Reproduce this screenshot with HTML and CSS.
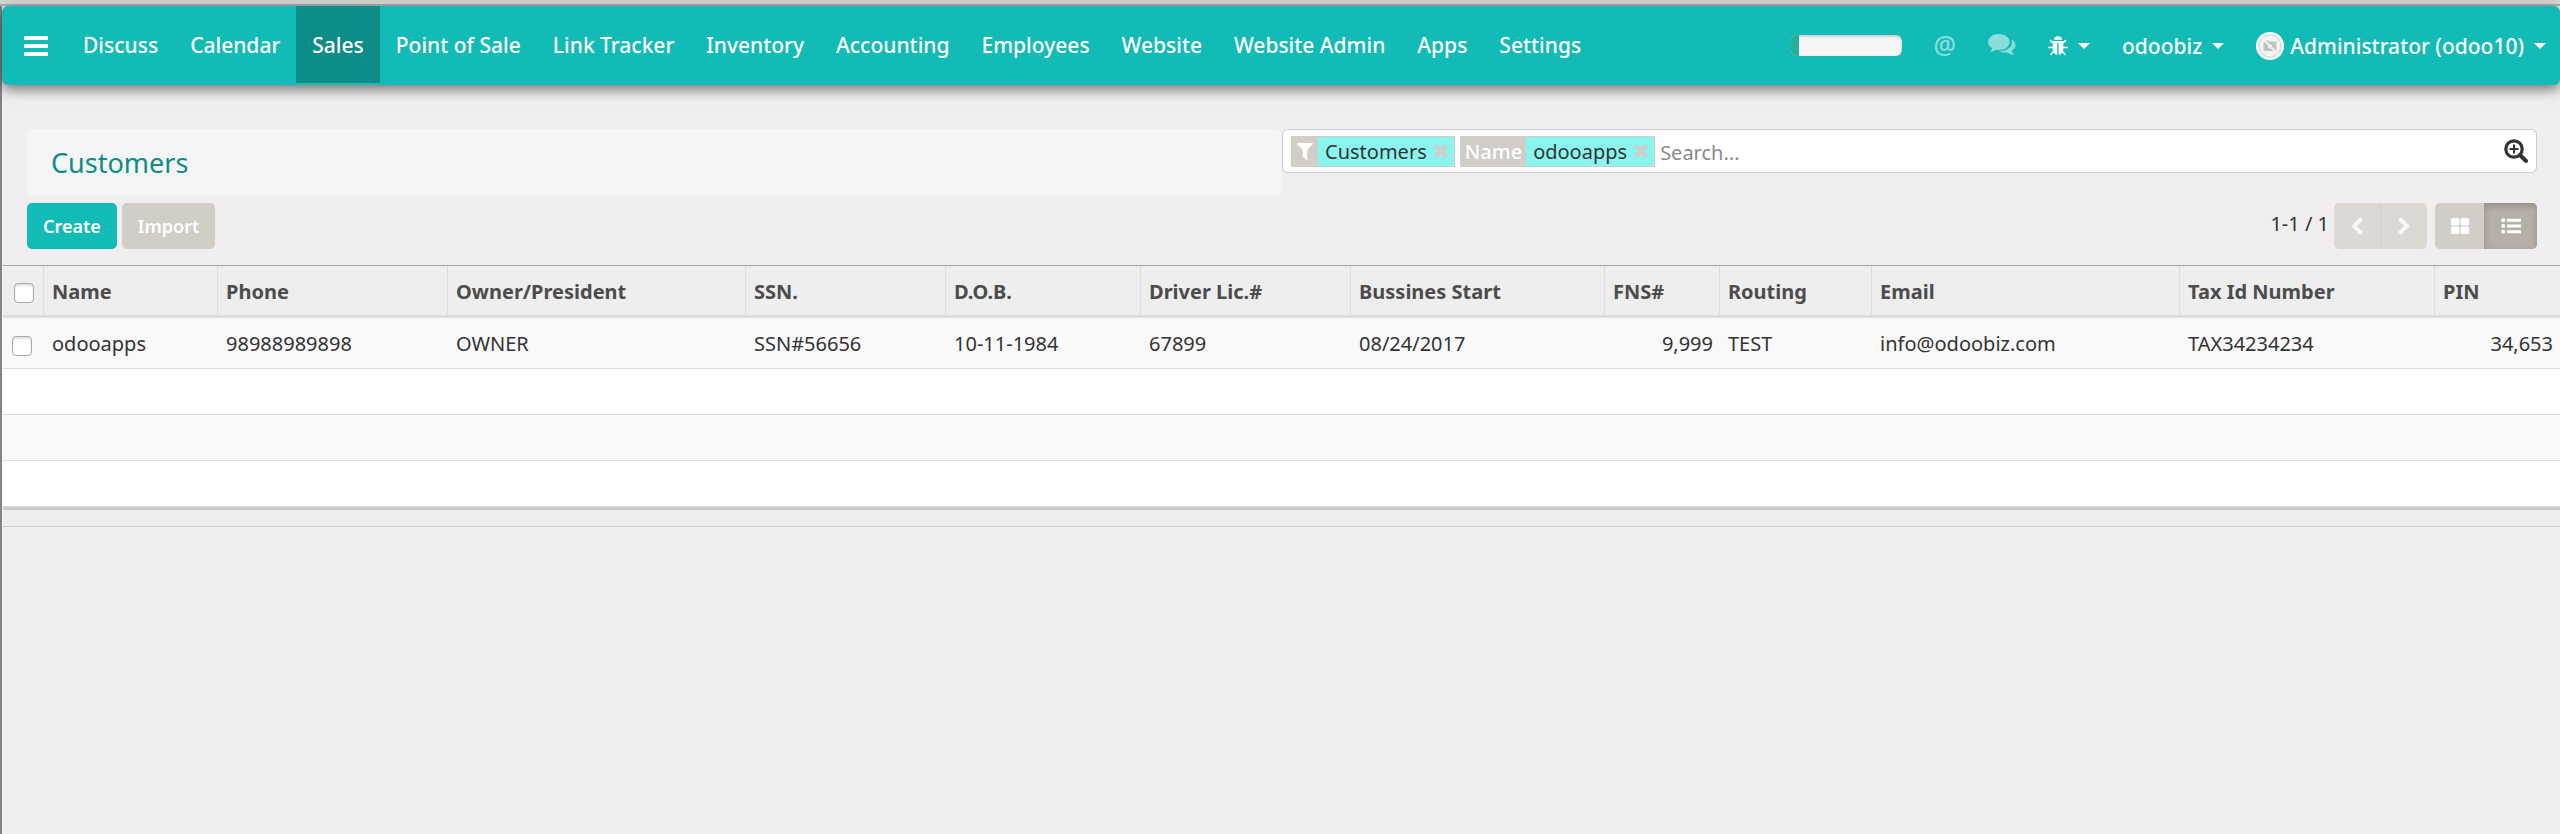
FILE: index.html
```html
<!DOCTYPE html>
<html lang="en">
<head>
<meta charset="utf-8">
<title>Customers - Odoo</title>
<link rel="stylesheet" href="styles.css">
</head>
<body>
<div class="chrome-strip"></div>
<div class="window">
  <header class="navbar">
    <button class="menu-toggle" type="button" aria-label="Toggle menu">
      <svg width="24" height="20" viewBox="0 0 24 20" fill="#fff"><rect width="24" height="4" rx="1"/><rect y="8" width="24" height="4" rx="1"/><rect y="16" width="24" height="4" rx="1"/></svg>
    </button>
    <nav class="menu">
      <a href="#">Discuss</a>
      <a href="#">Calendar</a>
      <a href="#" class="active">Sales</a>
      <a href="#">Point of Sale</a>
      <a href="#">Link Tracker</a>
      <a href="#">Inventory</a>
      <a href="#">Accounting</a>
      <a href="#">Employees</a>
      <a href="#">Website</a>
      <a href="#">Website Admin</a>
      <a href="#">Apps</a>
      <a href="#">Settings</a>
    </nav>
    <div class="systray">
      <div class="progress" role="progressbar" aria-label="Setup progress"><div class="progress-fill"></div></div>
      <button class="tray-button faded" type="button" aria-label="Mentions"><span class="at-sign">@</span></button>
      <button class="tray-button faded tray-chat" type="button" aria-label="Conversations">
        <svg width="28" height="22" viewBox="0 0 28 22" fill="currentColor"><path d="M11 0c6 0 10.600 3.500 10.600 8s-4.600 8-10.600 8c-1 0-2-.1-2.900-.3-1.500 1.100-3.300 1.800-5.200 2-.5.100-.7-.5-.3-.8.800-.7 1.400-1.500 1.700-2.700C1.800 12.700 0 10.500 0 8c0-4.500 5-8 11-8z"/><path d="M23.500 5.500C26 6.700 27.500 8.800 27.500 11c0 2.300-1.500 4.300-3.800 5.600.3 1.400.9 2.300 1.800 3.200.5.500.2 1-.4.900-2.200-.3-4.200-1.100-5.800-2.300-2.800.5-6.200 0-8.300-1.200C18.500 17.500 24 13.500 24 8c0-.8-.2-1.700-.5-2.500z"/></svg>
      </button>
      <button class="tray-button tray-debug" type="button" aria-label="Debug">
        <svg width="20" height="20" viewBox="0 0 20 20" fill="none" stroke="#fff" stroke-width="1.500"><path d="M6 3.800a4 3.600 0 0 1 8 0z" fill="#fff" stroke="none"/><path d="M4.700 5h10.600v8c0 3.300-2 5.500-4.600 5.800V7H9.300v11.800C6.700 18.500 4.700 16.300 4.700 13z" fill="#fff" stroke="none"/><path d="M5 7 2 4M15 7l3-3M5 11.500H0M15 11.500h5M5.500 15.500 2.500 19M14.500 15.500l3 3.500"/></svg>
        <span class="caret"></span>
      </button>
      <button class="tray-button" type="button">odoobiz<span class="caret"></span></button>
      <button class="tray-button tray-user" type="button">
        <svg width="28" height="28" viewBox="0 0 28 28"><circle cx="14" cy="14" r="14" fill="#fff"/><circle cx="14" cy="14" r="11" fill="#f4f4f4" stroke="#dcdcdc" stroke-width="1.500"/><path d="M7.500 10h3l1-1.500h1.500v1H20.500V19h-13z" fill="#c4c4c4"/><circle cx="14" cy="14.500" r="3" fill="#e9e9e9" stroke="#b0b0b0"/><path d="m6 6 16 16" stroke="#f0f0f0" stroke-width="2"/></svg>
        Administrator (odoo10)<span class="caret"></span>
      </button>
    </div>
  </header>

  <section class="control-panel">
    <h1 class="breadcrumb">Customers</h1>
    <div class="search">
      <div class="facet">
        <span class="facet-label facet-icon"><svg width="16" height="17" viewBox="0 0 16 17" fill="#fff"><path d="M.8 0h14.400c.8 0 1 .8.600 1.300L10.300 7v9.300c0 .6-.6.900-1 .5l-3-2.700c-.4-.3-.6-.6-.6-1V7L.2 1.300C-.2.800 0 0 .8 0z"/></svg></span>
        <span class="facet-value">Customers</span>
        <button class="facet-remove" type="button" aria-label="Remove Customers"><svg width="14" height="14" viewBox="0 0 14 14" stroke="#d1cdc7" stroke-width="4"><path d="m1.500 1.500 11 11M12.500 1.500l-11 11"/></svg></button>
      </div>
      <div class="facet">
        <span class="facet-label">Name</span>
        <span class="facet-value">odooapps</span>
        <button class="facet-remove" type="button" aria-label="Remove odooapps"><svg width="14" height="14" viewBox="0 0 14 14" stroke="#d1cdc7" stroke-width="4"><path d="m1.500 1.500 11 11M12.500 1.500l-11 11"/></svg></button>
      </div>
      <input class="search-input" type="text" placeholder="Search..." aria-label="Search">
      <button class="search-more" type="button" aria-label="Advanced search"><svg width="24" height="24" viewBox="0 0 24 24" fill="none" stroke="#333"><circle cx="10" cy="10" r="8.200" stroke-width="3.200"/><path d="m16 16 6 6" stroke-width="4" stroke-linecap="round"/><path d="M10 5.500v9M5.500 10h9" stroke-width="2"/></svg></button>
    </div>
    <div class="actions">
      <button class="btn btn-primary" type="button">Create</button>
      <button class="btn btn-default" type="button">Import</button>
    </div>
    <div class="view-tools">
      <span class="pager-text">1-1 / 1</span>
      <div class="group pager">
        <button type="button" aria-label="Previous"><svg width="12" height="18" viewBox="0 0 12 18" fill="none" stroke="#f8f8f8" stroke-width="4"><path d="M10.500 1.500 3 9l7.500 7.500"/></svg></button>
        <button type="button" aria-label="Next"><svg width="12" height="18" viewBox="0 0 12 18" fill="none" stroke="#f8f8f8" stroke-width="4"><path d="M1.500 1.500 9 9l-7.500 7.500"/></svg></button>
      </div>
      <div class="group switcher">
        <button type="button" aria-label="Kanban view"><svg width="18" height="16" viewBox="0 0 18 16" fill="#fff"><rect width="8.400" height="7.500" rx="1.500"/><rect x="9.600" width="8.400" height="7.500" rx="1.500"/><rect y="8.500" width="8.400" height="7.500" rx="1.500"/><rect x="9.600" y="8.500" width="8.400" height="7.500" rx="1.500"/></svg></button>
        <button type="button" class="pressed" aria-label="List view"><svg width="20" height="16" viewBox="0 0 20 16" fill="#fff"><circle cx="2.200" cy="2.200" r="2"/><circle cx="2.200" cy="8" r="2"/><circle cx="2.200" cy="13.800" r="2"/><path d="M6 .7h14v3H6zM6 6.500h14v3H6zM6 12.300h14v3H6z"/></svg></button>
      </div>
    </div>
  </section>

  <table class="list">
    <colgroup>
      <col class="c-check"><col class="c-name"><col class="c-phone"><col class="c-owner"><col class="c-ssn"><col class="c-dob"><col class="c-lic"><col class="c-start"><col class="c-fns"><col class="c-routing"><col class="c-email"><col class="c-tax"><col>
    </colgroup>
    <thead>
      <tr>
        <th class="check-head"><input type="checkbox" aria-label="Select all"></th>
        <th>Name</th><th>Phone</th><th>Owner/President</th><th>SSN.</th><th>D.O.B.</th><th>Driver Lic.#</th><th>Bussines Start</th><th>FNS#</th><th>Routing</th><th>Email</th><th>Tax Id Number</th><th>PIN</th>
      </tr>
    </thead>
    <tbody>
      <tr>
        <td class="check-cell"><input type="checkbox" aria-label="Select odooapps"></td>
        <td>odooapps</td><td>98988989898</td><td>OWNER</td><td>SSN#56656</td><td>10-11-1984</td><td>67899</td><td>08/24/2017</td><td class="number">9,999</td><td>TEST</td><td>info@odoobiz.com</td><td>TAX34234234</td><td class="number">34,653</td>
      </tr>
      <tr class="blank"><td colspan="13"></td></tr>
      <tr class="blank"><td colspan="13"></td></tr>
      <tr class="blank"><td colspan="13"></td></tr>
    </tbody>
    <tfoot>
      <tr><td colspan="13"></td></tr>
    </tfoot>
  </table>
</div>
</body>
</html>
```
FILE: styles.css
```css
* {
  box-sizing: border-box;
}

body {
  margin: 0;
  min-height: 100vh;
  display: flex;
  flex-direction: column;
  background: #f0eeee;
  color: #333;
  font: 20px/24px "Noto Sans", sans-serif;
}

button,
input {
  margin: 0;
  padding: 0;
  border: 0;
  background: none;
  color: inherit;
  font: inherit;
}

svg {
  display: block;
  flex: none;
}

.chrome-strip {
  height: 6px;
  background: linear-gradient(#d5d5d5 2px, #dddddd 2px, #dddddd 4px, #b2b0b0 4px);
}

.window {
  flex: 1;
  border-left: 2px solid #858383;
}

/* Navigation bar */
.navbar {
  height: 79px;
  display: flex;
  align-items: center;
  border-radius: 6px;
  background: #12bbb5;
  color: #fff;
  font-size: 21px;
  font-weight: 500;
  box-shadow: 0 4px 14px rgba(0, 0, 0, 0.55);
}

.menu-toggle {
  padding: 0 19px 0 22px;
}

.menu {
  height: 100%;
  display: flex;
  padding-bottom: 2px;
}

.menu a {
  display: flex;
  align-items: center;
  padding: 0 16px;
  color: #fff;
  text-decoration: none;
}

.menu .active {
  background: #0c8d87;
}

.systray {
  margin-left: auto;
  padding-right: 14px;
  display: flex;
  align-items: center;
  gap: 32px;
}

.progress {
  width: 111px;
  height: 21px;
  border-radius: 6px;
  overflow: hidden;
  background: #f5f5f5;
  box-shadow: inset 0 1px 3px rgba(0, 0, 0, 0.25);
}

.progress-fill {
  width: 8px;
  height: 100%;
  background: #26b196;
}

.tray-button {
  display: flex;
  align-items: center;
}

.faded {
  opacity: 0.5;
}

.at-sign {
  padding-bottom: 4px;
  font-size: 25px;
}

.tray-chat {
  padding-bottom: 2px;
}

.caret {
  margin-left: 10px;
  border: 6px solid transparent;
  border-top-color: #fff;
  border-bottom: 0;
}

.tray-user svg {
  margin-right: 6px;
}

/* Control panel */
.control-panel {
  padding: 44px 23px 16px 25px;
  display: grid;
  grid-template-columns: 1fr 1fr;
  row-gap: 8px;
}

.breadcrumb {
  height: 66px;
  margin: 0;
  padding: 1px 24px 0;
  border-radius: 6px;
  background: #f5f5f5;
  color: #0e8c86;
  font-size: 27px;
  font-weight: 400;
  line-height: 66px;
}

.search {
  height: 44px;
  padding: 0 8px;
  display: flex;
  align-items: center;
  gap: 5px;
  border: 1px solid #ccc;
  border-radius: 6px;
  background: #fff;
}

.facet {
  height: 31px;
  display: flex;
  align-items: center;
  border: 1px solid #d1cdc7;
  background: #8af5ef;
}

.facet-label {
  height: 100%;
  padding: 2px 4px 0;
  display: flex;
  align-items: center;
  background: #d1cdc7;
  color: #fff;
  font-weight: 500;
}

.facet-icon {
  padding: 0 5px;
}

.facet-value {
  padding: 2px 7px 0;
}

.facet-remove {
  padding-right: 6px;
}

.search-input {
  flex: 1;
  padding-top: 3px;
  outline: 0;
}

.search-input::placeholder {
  color: #8a8a8a;
}

.actions {
  display: flex;
  gap: 5px;
}

.btn {
  height: 46px;
  padding: 0 16px;
  border-radius: 5px;
  color: #fff;
  font-size: 18px;
  font-weight: 600;
}

.btn-primary {
  background: #12bbb5;
}

.btn-default {
  background: #d1cdc7;
}

.view-tools {
  display: flex;
  justify-content: flex-end;
}

.pager-text {
  padding: 9px 5px;
}

.group {
  height: 46px;
  display: flex;
  border-radius: 5px;
  overflow: hidden;
}

.group button {
  height: 100%;
  display: flex;
  align-items: center;
  justify-content: center;
}

.pager {
  margin-right: 8px;
  background: #dcd9d5;
}

.pager button {
  width: 46px;
}

.pager button + button {
  width: 47px;
  border-left: 1px solid #d1cdc9;
}

.switcher {
  background: #d1cdc7;
}

.switcher button {
  width: 49px;
}

.switcher .pressed {
  width: 53px;
  background: #b5afa7;
  box-shadow: inset 0 3px 6px rgba(0, 0, 0, 0.2);
}

/* Record list */
.list {
  width: 100%;
  table-layout: fixed;
  border-spacing: 0;
  border-left: 1px solid #f9f9f9;
  border-top: 1px solid #a5a5a5;
  background: #fff;
}

.c-check { width: 41px; }
.c-name { width: 174px; }
.c-phone { width: 230px; }
.c-owner { width: 298px; }
.c-ssn { width: 200px; }
.c-dob { width: 195px; }
.c-lic { width: 210px; }
.c-start { width: 254px; }
.c-fns { width: 115px; }
.c-routing { width: 152px; }
.c-email { width: 308px; }
.c-tax { width: 255px; }

.list th {
  height: 52px;
  padding: 2px 8px 0;
  border-right: 1px solid #ddd;
  border-bottom: 3px solid #ddd;
  background: #eee;
  color: #4c4c4c;
  text-align: left;
  white-space: nowrap;
}

.list th:last-child {
  border-right: 0;
}

.list td {
  height: 51px;
  padding: 2px 8px 0;
  border-bottom: 1px solid #ddd;
  white-space: nowrap;
}

.list tbody tr:nth-child(odd) td {
  background: #f9f9f9;
}

.list tbody .blank td {
  height: 46px;
}

.list .number {
  padding-right: 7px;
  text-align: right;
}

.list .check-head {
  padding: 4px 0 0 11px;
}

.list .check-cell {
  padding: 6px 0 0 9px;
}

.list input {
  appearance: none;
  display: block;
  width: 20px;
  height: 20px;
  border: 1px solid #aaa;
  border-radius: 4px;
  background: #fff;
  box-shadow: inset 0 2px 2px rgba(0, 0, 0, 0.12);
}

.list tfoot td {
  height: 20px;
  border-top: 3px solid #cacaca;
  border-bottom: 1px solid #cacaca;
  background: #eee;
}
```
